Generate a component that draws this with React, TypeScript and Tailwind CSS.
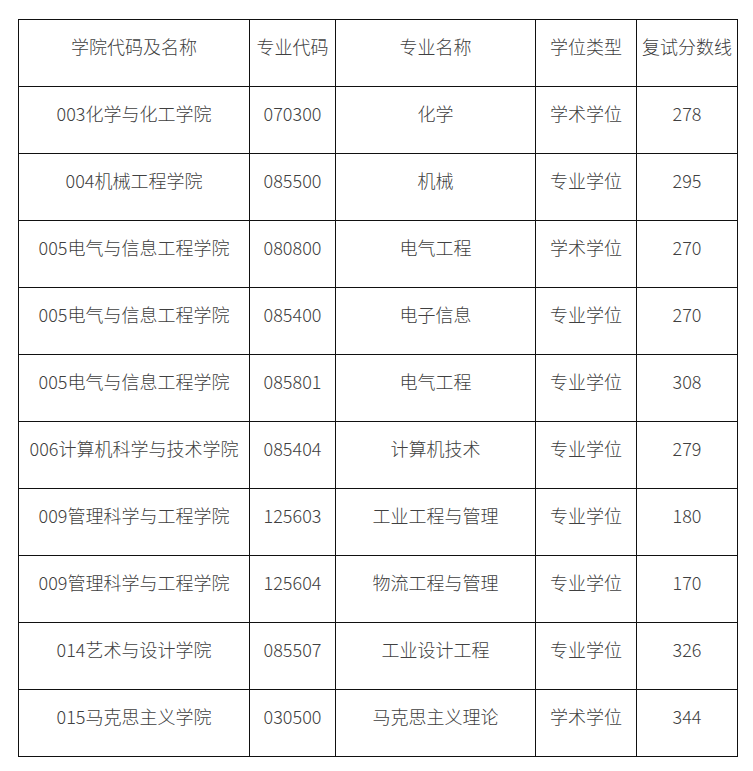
const rows = [
  ["003化学与化工学院", "070300", "化学", "学术学位", "278"],
  ["004机械工程学院", "085500", "机械", "专业学位", "295"],
  ["005电气与信息工程学院", "080800", "电气工程", "学术学位", "270"],
  ["005电气与信息工程学院", "085400", "电子信息", "专业学位", "270"],
  ["005电气与信息工程学院", "085801", "电气工程", "专业学位", "308"],
  ["006计算机科学与技术学院", "085404", "计算机技术", "专业学位", "279"],
  ["009管理科学与工程学院", "125603", "工业工程与管理", "专业学位", "180"],
  ["009管理科学与工程学院", "125604", "物流工程与管理", "专业学位", "170"],
  ["014艺术与设计学院", "085507", "工业设计工程", "专业学位", "326"],
  ["015马克思主义学院", "030500", "马克思主义理论", "学术学位", "344"],
];

const headers = ["学院代码及名称", "专业代码", "专业名称", "学位类型", "复试分数线"];
const widths = ["w-[231px]", "w-[86px]", "w-[200px]", "w-[101px]", "w-[101px]"];

function Cell({ text, w }: { text: string; w: string }) {
  return (
    <td
      className={`${w} h-[67px] border border-[#111] p-0 pb-[14px] text-center align-middle whitespace-nowrap`}
    >
      {text}
    </td>
  );
}

export default function App() {
  return (
    <div
      className="min-h-[771px] bg-white pl-[18px] pt-[19px] text-[18px] font-light leading-[24px] text-[#404040]"
      style={{ fontFamily: '"Noto Sans CJK SC", "Noto Sans", sans-serif' }}
    >
      <table className="w-[719px] table-fixed border-collapse">
        <tbody>
          <tr>
            {headers.map((h, i) => (
              <Cell key={h} text={h} w={widths[i]} />
            ))}
          </tr>
          {rows.map((r, ri) => (
            <tr key={ri}>
              {r.map((c, i) => (
                <Cell key={i} text={c} w={widths[i]} />
              ))}
            </tr>
          ))}
        </tbody>
      </table>
    </div>
  );
}
